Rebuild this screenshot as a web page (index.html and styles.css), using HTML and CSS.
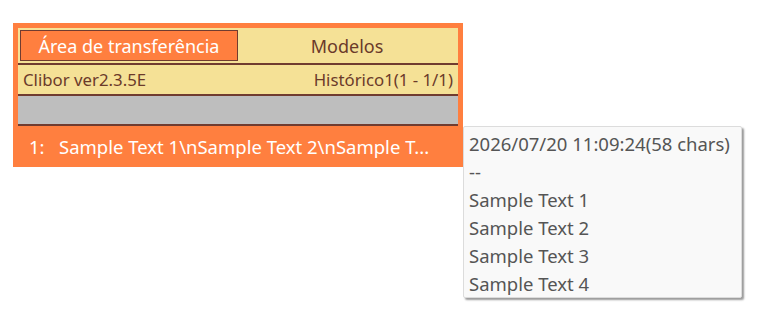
FILE: index.html
```html
<!DOCTYPE html>
<html lang="pt">
<head>
    <meta charset="UTF-8">
    <title>Clibor</title>
    <link rel="stylesheet" href="styles.css">
</head>
<body>
    <div class="panel">
        <div class="tabs">
            <div class="tab active">Área de transferência</div>
            <div class="tab">Modelos</div>
        </div>
        <div class="rule"></div>
        <div class="status">
            <span>Clibor ver2.3.5E</span>
            <span>Histórico1(1 - 1/1)</span>
        </div>
        <div class="rule"></div>
        <div class="search"></div>
        <div class="rule"></div>
        <div class="item"><span class="num">1:</span>Sample Text 1\nSample Text 2\nSample T...</div>
    </div>

    <div class="tooltip">
        <div>2026/07/20 11:09:24(58 chars)</div>
        <div>--</div>
        <div>Sample Text 1</div>
        <div>Sample Text 2</div>
        <div>Sample Text 3</div>
        <div>Sample Text 4</div>
    </div>
</body>
</html>
```

FILE: styles.css
```css
body { margin: 0; background: #fff; font-family: "Noto Sans", "Open Sans", sans-serif; }
.panel { margin: 23px 0 0 13px; width: 440px; height: 139px; padding: 5px 5px 0; background: #ff7f3f; }
.tabs { display: flex; height: 31px; padding: 2px; background: #f5e196; }
.tab { flex: 1; display: flex; align-items: center; justify-content: center; font-size: 18px; color: #6b3a2a; }
.tab.active { flex: none; width: 216px; border: 1px solid #703c30; background: #ff7f3f; color: #fff; }
.rule { height: 2px; background: #703c30; }
.status { display: flex; justify-content: space-between; align-items: center; height: 29px; padding: 0 5px; background: #f5e196; font-size: 16.8px; color: #6b3a2a; }
.search { height: 28px; background: #bebebe; }
.item { height: 41px; display: flex; align-items: center; padding-left: 11px; font-size: 18.5px; color: #fff; }
.item .num { width: 30px; }
.tooltip { position: absolute; left: 463px; top: 126px; width: 272px; height: 167px; padding: 3px 0 0 5px; background: #f9f9f9; border: 1px solid #dcdcdc; border-radius: 2px; box-shadow: 2px 2px 2px #9a9a9a; font-size: 18.5px; line-height: 28px; color: #555; }
```
